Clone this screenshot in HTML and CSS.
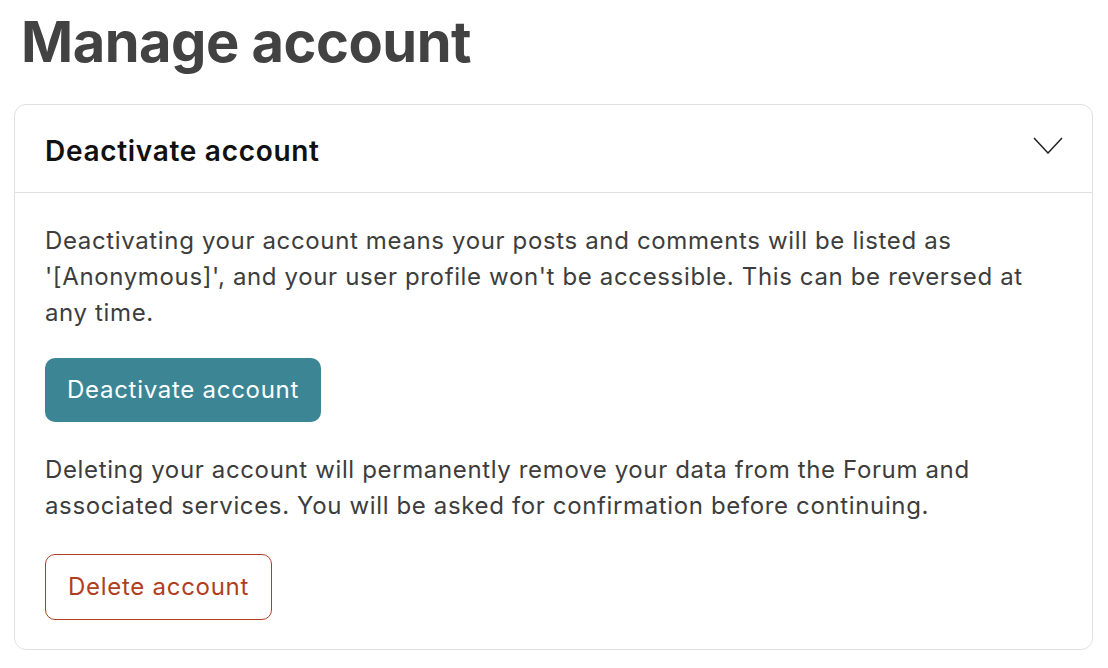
FILE: index.html
```html
<!DOCTYPE html>
<html lang="en">
<head>
<meta charset="utf-8">
<title>Manage account</title>
<link rel="stylesheet" href="styles.css">
</head>
<body>
<main class="page">
  <h1 class="title">Manage account</h1>
  <section class="card">
    <header class="card-header">
      <h2 class="card-title">Deactivate account</h2>
      <svg class="chevron" width="30" height="17" viewBox="0 0 30 17" aria-hidden="true">
        <polyline points="1,1 15,16 29,1" fill="none" stroke="#222" stroke-width="1.5"/>
      </svg>
    </header>
    <div class="card-body">
      <p class="text text-first">Deactivating your account means your posts and comments will be listed as '[Anonymous]', and your user profile won't be accessible. This can be reversed at any time.</p>
      <button class="btn btn-primary" type="button">Deactivate account</button>
      <p class="text text-second">Deleting your account will permanently remove your data from the Forum and associated services. You will be asked for confirmation before continuing.</p>
      <button class="btn btn-danger" type="button">Delete account</button>
    </div>
  </section>
</main>
</body>
</html>
```

FILE: styles.css
```css
* { box-sizing: border-box; }
html, body { margin: 0; padding: 0; background: #fff; }
body { font-family: Inter, "Noto Sans", sans-serif; }
.page { padding: 8px 15px 0 14px; }
.title {
  margin: 0 0 28px 7px;
  font-size: 56px;
  line-height: 68px;
  font-weight: 700;
  color: #424242;
  letter-spacing: -0.5px;
}
.card {
  border: 1px solid #e0e0e0;
  border-radius: 12px;
  background: #fff;
}
.card-header {
  height: 88px;
  display: flex;
  align-items: center;
  justify-content: space-between;
  padding: 4px 29px 0 30px;
  border-bottom: 1px solid #e0e0e0;
}
.card-title {
  margin: 0;
  font-size: 28px;
  font-weight: 600;
  color: #111;
  line-height: 36px;
  letter-spacing: 0.7px;
}
.chevron { display: block; margin-top: -10px; }
.card-body { padding: 30px 30px 29px 30px; }
.text {
  margin: 0;
  font-size: 24px;
  line-height: 36px;
  color: #3d3d3d;
  letter-spacing: 0.64px;
}
.text-first { margin-bottom: 27px; }
.text-second { margin-bottom: 30px; }
.btn {
  display: block;
  font-family: Inter, "Noto Sans", sans-serif;
  font-size: 24px;
  line-height: 36px;
  letter-spacing: 0.72px;
  border-radius: 10px;
  cursor: pointer;
}
.btn-primary {
  background: #3c8595;
  color: #fff;
  border: 0;
  padding: 14px 22px;
  margin-bottom: 30px;
}
.btn-danger {
  background: #fff;
  color: #b03e20;
  border: 1px solid #b03e20;
  padding: 14px 22px;
}
```
